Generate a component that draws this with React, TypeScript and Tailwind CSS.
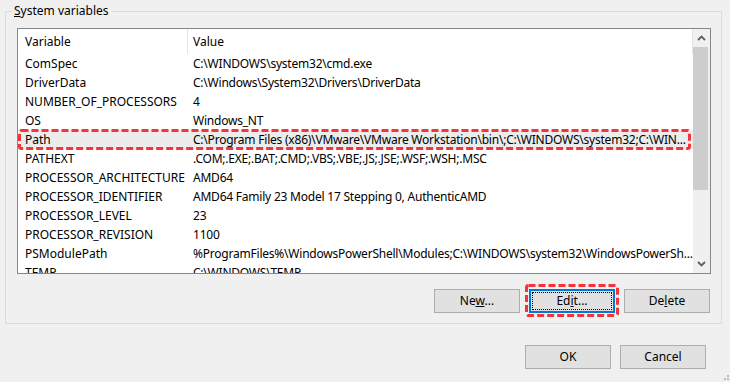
import React from "react";

const ROWS: [string, string][] = [
  ["ComSpec", "C:\\WINDOWS\\system32\\cmd.exe"],
  ["DriverData", "C:\\Windows\\System32\\Drivers\\DriverData"],
  ["NUMBER_OF_PROCESSORS", "4"],
  ["OS", "Windows_NT"],
  ["Path", "C:\\Program Files (x86)\\VMware\\VMware Workstation\\bin\\;C:\\WINDOWS\\system32;C:\\WIN..."],
  ["PATHEXT", ".COM;.EXE;.BAT;.CMD;.VBS;.VBE;.JS;.JSE;.WSF;.WSH;.MSC"],
  ["PROCESSOR_ARCHITECTURE", "AMD64"],
  ["PROCESSOR_IDENTIFIER", "AMD64 Family 23 Model 17 Stepping 0, AuthenticAMD"],
  ["PROCESSOR_LEVEL", "23"],
  ["PROCESSOR_REVISION", "1100"],
  ["PSModulePath", "%ProgramFiles%\\WindowsPowerShell\\Modules;C:\\WINDOWS\\system32\\WindowsPowerSh..."],
  ["TEMP", "C:\\WINDOWS\\TEMP"],
];

// red highlight drawn on top of the screenshot
function DashBox({ w, h }: { w: number; h: number }) {
  return (
    <svg width={w} height={h} className="block">
      <rect
        x={1.5}
        y={1.5}
        width={w - 3}
        height={h - 3}
        rx={2}
        fill="none"
        stroke="#f4333a"
        strokeWidth={3}
        strokeDasharray="7 3"
      />
    </svg>
  );
}

function Chevron({ up }: { up?: boolean }) {
  return (
    <svg width="9" height="6" viewBox="0 0 9 6">
      <path
        d={up ? "M1 5 L4.5 1.5 L8 5" : "M1 1 L4.5 4.5 L8 1"}
        fill="none"
        stroke="#606060"
        strokeWidth="1.8"
      />
    </svg>
  );
}

function Btn({ children, focused }: { children: React.ReactNode; focused?: boolean }) {
  return (
    <button
      type="button"
      className={
        focused
          ? "relative w-[86px] h-[24px] bg-[#e1e1e1] border-2 border-[#0078d7] flex items-center justify-center"
          : "w-[86px] h-[24px] bg-[#e1e1e1] border border-[#adadad] flex items-center justify-center"
      }
    >
      {focused && <span className="absolute inset-[1px] border border-dotted border-black" />}
      <span className="relative">{children}</span>
    </button>
  );
}

export default function App() {
  return (
    <div className="relative w-[730px] h-[382px] overflow-hidden bg-[#f0f0f0] pl-[5px] pt-[11px] text-[12px] text-black font-['Segoe_UI','Noto_Sans',sans-serif]">
      <div className="relative w-[717px] h-[313px] border border-[#dcdcdc] pl-[11px] pt-[16px]">
        <span className="absolute left-[6px] top-[-9px] px-[2px] bg-[#f0f0f0] leading-[16px]">
          <u>S</u>ystem variables
        </span>

        <div className="w-[694px] h-[246px] border border-[#828790] bg-white flex overflow-hidden">
          <div className="flex-1 min-w-0">
            <div className="flex h-[25px] items-center">
              <div className="w-[170px] h-full flex items-center pl-[7px] border-r border-[#e5e5e5]">Variable</div>
              <div className="flex-1 h-full flex items-center pl-[5px] border-r border-[#e5e5e5]">Value</div>
            </div>
            {ROWS.map(([name, value]) => (
              <div
                key={name}
                className={
                  name === "Path"
                    ? "relative flex h-[19px] items-center bg-[#ececec]"
                    : "flex h-[19px] items-center"
                }
              >
                <div className="w-[170px] shrink-0 pl-[7px] whitespace-nowrap overflow-hidden">{name}</div>
                <div className="flex-1 min-w-0 pl-[5px] whitespace-nowrap overflow-hidden tracking-[-0.22px]">{value}</div>
                {name === "Path" && (
                  <div className="absolute left-0 top-[-1px]">
                    <DashBox w={673} h={21} />
                  </div>
                )}
              </div>
            ))}
          </div>
          <div className="w-[17px] shrink-0 bg-[#f0f0f0] flex flex-col">
            <div className="h-[18px] flex items-center justify-center">
              <Chevron up />
            </div>
            <div className="h-[143px] w-[15px] bg-[#cdcdcd]" />
            <div className="flex-1" />
            <div className="h-[18px] flex items-center justify-center">
              <Chevron />
            </div>
          </div>
        </div>

        <div className="flex justify-end gap-[9px] mt-[15px] pr-[11px]">
          <Btn>
            Ne<u>w</u>...
          </Btn>
          <div className="relative">
            <Btn focused>
              Ed<u>i</u>t...
            </Btn>
            <div className="absolute left-[-4px] top-[-5px]">
              <DashBox w={94} h={33} />
            </div>
          </div>
          <Btn>
            De<u>l</u>ete
          </Btn>
        </div>
      </div>

      <div className="flex justify-end gap-[9px] mt-[21px] pr-[24px]">
        <Btn>OK</Btn>
        <Btn>Cancel</Btn>
      </div>

      <svg className="absolute right-[1px] bottom-[1px]" width="6" height="6" viewBox="0 0 6 6">
        <rect x="4" y="0" width="2" height="2" fill="#bcbcbc" />
        <rect x="1" y="3" width="2" height="2" fill="#bcbcbc" />
        <rect x="4" y="3" width="2" height="2" fill="#bcbcbc" />
      </svg>
    </div>
  );
}
